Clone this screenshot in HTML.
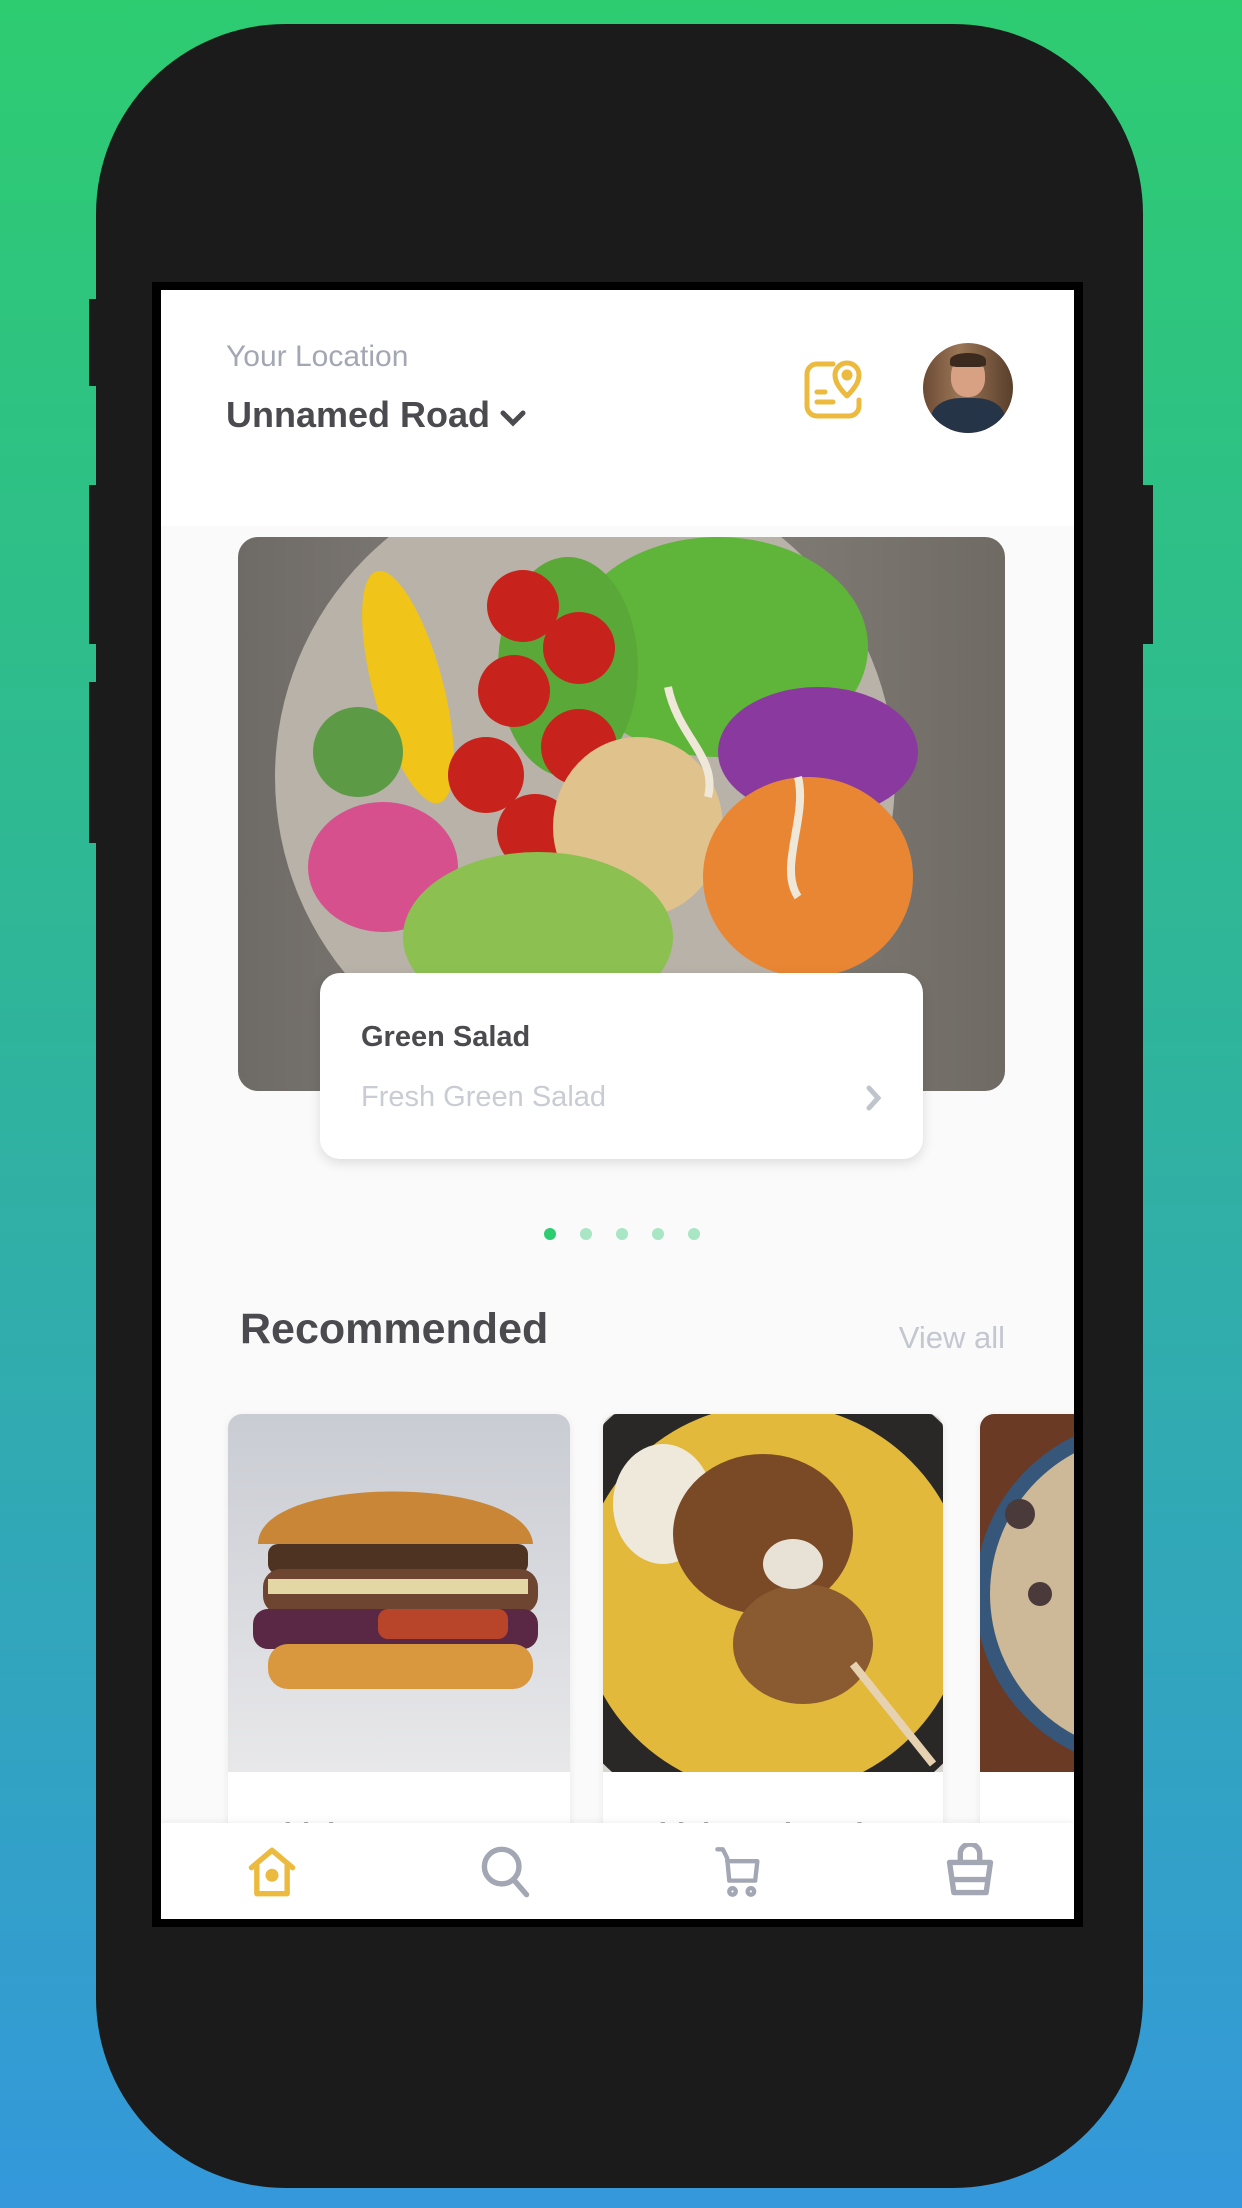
<!DOCTYPE html>
<html><head><meta charset="utf-8"><style>
*{margin:0;padding:0;box-sizing:border-box}
body{width:1242px;height:2208px;overflow:hidden;background:linear-gradient(180deg,#2ecc71 0%,#2fb59a 45%,#3498db 100%);font-family:"Liberation Sans",sans-serif;position:relative}
.a{position:absolute}
.phone{left:96px;top:24px;width:1047px;height:2164px;background:#1b1b1b;border-radius:190px}
.btn{background:#1b1b1b}
.frame{left:152px;top:282px;width:931px;height:1645px;background:#000}
.screen{left:161px;top:290px;width:913px;height:1629px;background:#fafafa;overflow:hidden}
.hdr{left:0;top:0;width:913px;height:236px;background:#fff}
.card{background:#fff;border-radius:14px;box-shadow:0 2px 8px rgba(0,0,0,.08);overflow:hidden}
.dot{width:12px;height:12px;border-radius:50%;background:#a8e6c4;top:938px}
</style></head><body>
<div class="a phone"></div>
<div class="a btn" style="left:89px;top:299px;width:12px;height:87px"></div>
<div class="a btn" style="left:89px;top:485px;width:12px;height:159px"></div>
<div class="a btn" style="left:89px;top:682px;width:12px;height:161px"></div>
<div class="a btn" style="left:1138px;top:485px;width:15px;height:159px"></div>
<div class="a frame"></div>
<div class="a screen">
 <div class="a hdr">
  <div class="a" style="left:65px;top:50px;font-size:30px;color:#a3a7b4">Your Location</div>
  <div class="a" style="left:65px;top:104px;font-size:36px;color:#4a4a4f;font-weight:bold">Unnamed Road</div>
  <svg class="a" style="left:337px;top:118px" width="30" height="22" viewBox="0 0 30 22"><path d="M5 5 L15 15 L25 5" stroke="#4a4a4f" stroke-width="5" fill="none" stroke-linecap="round"/></svg>
  <svg class="a" style="left:642px;top:68px" width="60" height="62" viewBox="0 0 60 62" fill="none" stroke="#ebba3f" stroke-width="5" stroke-linecap="round" stroke-linejoin="round"><path d="M30 6 H14 A10 10 0 0 0 4 16 V48 A10 10 0 0 0 14 58 H46 A10 10 0 0 0 56 48 V42"/><path d="M44 38 C34 28 32 22 32 17 A12 12 0 0 1 56 17 C56 22 54 28 44 38Z"/><circle cx="44" cy="17" r="3" fill="#ebba3f"/><path d="M14 34 H22 M14 44 H30"/></svg>
  <div class="a" style="left:762px;top:53px;width:90px;height:90px;border-radius:50%;overflow:hidden;background:linear-gradient(90deg,#6b4a35,#9b7656 40%,#7a5a40 70%,#5a3f2c)">
   <div class="a" style="left:28px;top:14px;width:34px;height:40px;border-radius:45%;background:#d9a184"></div>
   <div class="a" style="left:27px;top:10px;width:36px;height:14px;border-radius:50% 50% 20% 20%;background:#3d2a1e"></div>
   <div class="a" style="left:8px;top:55px;width:74px;height:50px;border-radius:40% 40% 0 0;background:#253447"></div>
  </div>
 </div>
 <div class="a" style="left:77px;top:247px;width:767px;height:554px;border-radius:20px;overflow:hidden">
  <svg width="767" height="554" viewBox="0 0 767 554">
   <defs><linearGradient id="w" x1="0" x2="1"><stop offset="0" stop-color="#6e6a66"/><stop offset=".5" stop-color="#8a857f"/><stop offset="1" stop-color="#6f6a64"/></linearGradient></defs>
   <rect width="767" height="554" fill="url(#w)"/>
   <circle cx="347" cy="240" r="310" fill="#b8b2a8"/>
   <ellipse cx="480" cy="110" rx="150" ry="110" fill="#5fb43a"/>
   <ellipse cx="330" cy="130" rx="70" ry="110" fill="#5aa838"/>
   <ellipse cx="580" cy="215" rx="100" ry="65" fill="#8a3a9e"/>
   <ellipse cx="170" cy="150" rx="35" ry="120" fill="#f0c419" transform="rotate(-15 170 150)"/>
   <ellipse cx="120" cy="215" rx="45" ry="45" fill="#5d9a45"/>
   <g fill="#c8221c"><circle cx="285" cy="69" r="36"/><circle cx="341" cy="111" r="36"/><circle cx="276" cy="154" r="36"/><circle cx="341" cy="210" r="38"/><circle cx="248" cy="238" r="38"/><circle cx="297" cy="295" r="38"/></g>
   <ellipse cx="400" cy="290" rx="85" ry="90" fill="#e0c28c"/>
   <ellipse cx="570" cy="340" rx="105" ry="100" fill="#e98633"/>
   <ellipse cx="145" cy="330" rx="75" ry="65" fill="#d6508e"/>
   <ellipse cx="300" cy="400" rx="135" ry="85" fill="#8cc152"/>
   <path d="M430 150 C440 200 480 220 470 260 M560 240 C570 280 540 330 560 360" stroke="#efe8d8" stroke-width="8" fill="none"/>
  </svg>
 </div>
 <div class="a card" style="left:159px;top:683px;width:603px;height:186px;border-radius:20px;box-shadow:0 4px 12px rgba(0,0,0,.12)">
  <div class="a" style="left:41px;top:48px;font-size:29px;font-weight:bold;color:#4a4a4f">Green Salad</div>
  <div class="a" style="left:41px;top:108px;font-size:29px;color:#c9ccd3">Fresh Green Salad</div>
  <svg class="a" style="left:544px;top:110px" width="20" height="30" viewBox="0 0 20 30"><path d="M5 5 L14 15 L5 25" stroke="#c0c4cc" stroke-width="5" fill="none" stroke-linecap="round"/></svg>
 </div>
 <div class="a dot" style="left:383px;background:#2ecc71"></div>
 <div class="a dot" style="left:419px"></div>
 <div class="a dot" style="left:455px"></div>
 <div class="a dot" style="left:491px"></div>
 <div class="a dot" style="left:527px"></div>
 <div class="a" style="left:79px;top:1015px;font-size:43px;font-weight:bold;color:#4a4a4f">Recommended</div>
 <div class="a" style="left:730px;top:1030px;font-size:31px;color:#c3c7cf;width:114px;text-align:right">View all</div>
 <div class="a card" style="left:67px;top:1124px;width:342px;height:500px">
  <svg width="342" height="358" viewBox="0 0 342 358"><defs><linearGradient id="b" x1="0" y1="0" x2="0" y2="1"><stop offset="0" stop-color="#c9ccd3"/><stop offset="1" stop-color="#e8e8ea"/></linearGradient></defs>
   <rect width="342" height="358" fill="url(#b)"/>
   <path d="M30 130 C30 60 300 60 305 130 Z" fill="#c88636"/>
   <rect x="40" y="130" width="260" height="30" rx="10" fill="#4e3222"/>
   <rect x="35" y="155" width="275" height="45" rx="18" fill="#6d4530"/>
   <rect x="40" y="165" width="260" height="15" fill="#e3d7a6"/>
   <rect x="25" y="195" width="285" height="40" rx="15" fill="#5a2844"/>
   <rect x="150" y="195" width="130" height="30" rx="10" fill="#b8452a"/>
   <rect x="40" y="230" width="265" height="45" rx="20" fill="#d9983e"/>
  </svg>
  <div class="a" style="left:34px;top:404px;font-size:30px;font-weight:bold;color:#4a4a4f">Chicken Burger</div>
 </div>
 <div class="a card" style="left:442px;top:1124px;width:340px;height:500px">
  <svg width="340" height="358" viewBox="0 0 340 358"><rect width="340" height="358" fill="#d8d4cf"/>
   <circle cx="170" cy="180" r="240" fill="#2a2827"/>
   <circle cx="170" cy="185" r="195" fill="#e2b93a"/>
   <ellipse cx="60" cy="90" rx="50" ry="60" fill="#efe9dc"/>
   <ellipse cx="160" cy="120" rx="90" ry="80" fill="#7a4a26"/>
   <ellipse cx="200" cy="230" rx="70" ry="60" fill="#8a5a30"/>
   <ellipse cx="190" cy="150" rx="30" ry="25" fill="#e8e2d6"/>
   <path d="M250 250 L330 350" stroke="#e6d2b0" stroke-width="8"/>
  </svg>
  <div class="a" style="left:34px;top:404px;font-size:30px;font-weight:bold;color:#4a4a4f">Chicken Biryani</div>
 </div>
 <div class="a card" style="left:819px;top:1124px;width:340px;height:500px">
  <svg width="340" height="358" viewBox="0 0 340 358"><rect width="340" height="358" fill="#6a3a24"/>
   <circle cx="170" cy="180" r="175" fill="#36577a"/>
   <circle cx="170" cy="180" r="160" fill="#cdb898"/>
   <circle cx="40" cy="100" r="15" fill="#4a3a3a"/><circle cx="60" cy="180" r="12" fill="#4a3a3a"/>
  </svg>
  <div class="a" style="left:34px;top:404px;font-size:30px;font-weight:bold;color:#4a4a4f">Muesli</div>
 </div>
 <div class="a" style="left:0;top:1533px;width:913px;height:96px;background:#fff;box-shadow:0 -2px 6px rgba(0,0,0,.05)">
  <svg class="a" style="left:86px;top:23px" width="50" height="52" viewBox="0 0 46 48" fill="none" stroke="#ebba3f" stroke-width="5" stroke-linecap="round" stroke-linejoin="round"><path d="M4 20 L23 4 L42 20"/><path d="M9 18 V44 H37 V18"/><circle cx="23" cy="27" r="3.5" fill="#ebba3f"/></svg>
  <svg class="a" style="left:319px;top:22px" width="52" height="54" viewBox="0 0 48 50" fill="none" stroke="#a3a7b4" stroke-width="5" stroke-linecap="round"><circle cx="20" cy="20" r="16"/><path d="M31 32 L43 46"/></svg>
  <svg class="a" style="left:553px;top:22px" width="50" height="54" viewBox="0 0 46 50" fill="none" stroke="#a3a7b4" stroke-width="4" stroke-linecap="round" stroke-linejoin="round"><path d="M3 4 H8 L12 12 L14 33 H38 L40 15 H12"/><circle cx="17" cy="43" r="3"/><circle cx="34" cy="43" r="3"/></svg>
  <svg class="a" style="left:784px;top:20px" width="50" height="56" viewBox="0 0 46 52" fill="none" stroke="#a3a7b4" stroke-width="5" stroke-linecap="round" stroke-linejoin="round"><path d="M14 16 V10 A9 9 0 0 1 32 10 V16"/><path d="M4 18 H42 L38 46 H8 Z"/><path d="M7 34 H39"/></svg>
 </div>
</div>
</body></html>
